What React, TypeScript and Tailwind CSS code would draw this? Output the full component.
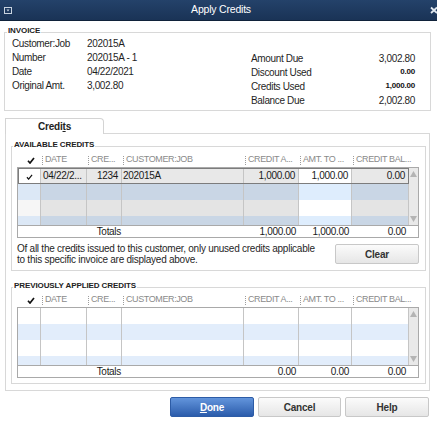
import React from "react";

type RowKind = "selected" | "blue" | "gray" | "white" | "pale";

const CELL_BG: Record<RowKind, string[]> = {
  selected: ["bg-white", "bg-[#e8e8e8]", "bg-[#e8e8e8]", "bg-[#e8e8e8]", "bg-[#e8e8e8]", "bg-white", "bg-[#e8e8e8]"],
  blue: ["bg-[#dce8f6]", "bg-[#c9d6e5]", "bg-[#c9d6e5]", "bg-[#c9d6e5]", "bg-[#c9d6e5]", "bg-[#deedfd]", "bg-[#c9d6e5]"],
  gray: ["bg-[#f6f6f6]", "bg-[#e4e4e4]", "bg-[#e4e4e4]", "bg-[#e4e4e4]", "bg-[#e4e4e4]", "bg-white", "bg-[#e4e4e4]"],
  white: ["bg-white", "bg-white", "bg-white", "bg-white", "bg-white", "bg-white", "bg-white"],
  pale: ["bg-[#e2edfb]", "bg-[#e2edfb]", "bg-[#e2edfb]", "bg-[#e2edfb]", "bg-[#e2edfb]", "bg-[#e2edfb]", "bg-[#e2edfb]"],
};

interface Row {
  kind: RowKind;
  cells?: string[];
}

function Check({ small }: { small?: boolean }) {
  return (
    <svg width={small ? 7 : 8} height={small ? 6 : 7} viewBox="0 0 8 7">
      <path d="M1 3.8 L3 6 L7 1" fill="none" stroke="#111" strokeWidth={small ? 1.4 : 1.7} />
    </svg>
  );
}

function GroupBox({
  label,
  className,
  labelClass,
  children,
}: {
  label: string;
  className: string;
  labelClass: string;
  children: React.ReactNode;
}) {
  return (
    <div className={`relative box-border border border-[#d8d8d8] bg-white ${className}`}>
      <span
        className={`absolute -top-[7px] bg-white px-[1px] text-[8px] font-bold leading-[9px] tracking-[-0.1px] text-[#222] ${labelClass}`}
      >
        {label}
      </span>
      {children}
    </div>
  );
}

function HeadCell({ text }: { text: string }) {
  return (
    <div className="flex min-w-0 items-center gap-[2px] whitespace-nowrap pl-[1px]">
      <span className="h-[9px] shrink-0 border-l border-dotted border-[#9c9c9c]" />
      <span>{text}</span>
    </div>
  );
}

function TableHeader() {
  return (
    <div className="grid h-[14px] grid-cols-[23px_46px_35px_122px_55px_53px_57px] items-center pl-[1px] text-[9px] tracking-[-0.4px] text-[#8a8a8a]">
      <div className="flex justify-center pl-[2px]">
        <Check />
      </div>
      <HeadCell text="DATE" />
      <HeadCell text="CRE..." />
      <HeadCell text="CUSTOMER:JOB" />
      <HeadCell text="CREDIT A..." />
      <HeadCell text="AMT. TO ..." />
      <HeadCell text="CREDIT BAL..." />
    </div>
  );
}

function ScrollBar() {
  return (
    <div className="flex w-[9px] flex-col items-center justify-between bg-[#e9e9e9] py-[3px]">
      <svg width="7" height="6" viewBox="0 0 7 6">
        <path d="M3.5 0 L7 6 L0 6 Z" fill="#b4b4b4" />
      </svg>
      <svg width="7" height="6" viewBox="0 0 7 6">
        <path d="M0 0 L7 0 L3.5 6 Z" fill="#b4b4b4" />
      </svg>
    </div>
  );
}

function CreditTable({ rows, totals }: { rows: Row[]; totals: string[] }) {
  const align = ["", "text-left pl-[2px]", "text-right pr-[3px]", "text-left pl-[1px]", "text-right pr-[3px]", "text-right pr-[3px]", "text-right pr-[3px]"];
  return (
    <div className="w-[402px] border border-[#a9a9a9] text-[10px] tracking-[-0.3px] text-[#1a1a1a]">
      <div className="flex h-[57px]">
        <div className="flex w-[391px] flex-col overflow-hidden">
          {rows.map((row, r) => (
            <div
              key={r}
              className={`grid h-[16px] shrink-0 grid-cols-[23px_46px_35px_122px_55px_53px_57px] ${
                row.kind === "selected" ? "outline outline-1 -outline-offset-1 outline-[#7c7c7c]" : ""
              }`}
            >
              {CELL_BG[row.kind].map((bg, c) => (
                <div
                  key={c}
                  className={`overflow-hidden whitespace-nowrap border-r border-[#c5c5c5] leading-[16px] ${bg} ${align[c]}`}
                >
                  {c === 0 && row.cells ? (
                    <div className="flex h-full items-center justify-center pl-[1px] pt-[2px]">
                      <Check small />
                    </div>
                  ) : (
                    row.cells?.[c] ?? ""
                  )}
                </div>
              ))}
            </div>
          ))}
        </div>
        <ScrollBar />
      </div>
      <div className="grid h-[12px] grid-cols-[104px_122px_55px_53px_57px_9px] items-center border-t border-[#a9a9a9] bg-white leading-[12px]">
        <div className="pr-[1px] text-right">Totals</div>
        <div />
        <div className="pr-[3px] text-right">{totals[0]}</div>
        <div className="pr-[3px] text-right">{totals[1]}</div>
        <div className="pr-[3px] text-right">{totals[2]}</div>
        <div />
      </div>
    </div>
  );
}

function Button({ children, primary, className = "" }: { children: React.ReactNode; primary?: boolean; className?: string }) {
  return (
    <button
      type="button"
      className={`box-border flex h-[20px] items-center justify-center rounded-[2px] border text-[10px] font-bold tracking-[-0.2px] ${
        primary
          ? "border-[#2d5ca6] bg-gradient-to-b from-[#6395dc] to-[#2b5cab] text-white"
          : "border-[#c8c8c8] bg-gradient-to-b from-[#fbfbfb] to-[#e6e6e6] text-[#333]"
      } ${className}`}
    >
      {children}
    </button>
  );
}

export default function App() {
  const invoiceLeft = [
    ["Customer:Job", "202015A"],
    ["Number", "202015A - 1"],
    ["Date", "04/22/2021"],
    ["Original Amt.", "3,002.80"],
  ];

  const availableRows: Row[] = [
    { kind: "selected", cells: ["✓", "04/22/2...", "1234", "202015A", "1,000.00", "1,000.00", "0.00"] },
    { kind: "blue" },
    { kind: "gray" },
    { kind: "blue" },
  ];

  const previousRows: Row[] = [{ kind: "white" }, { kind: "pale" }, { kind: "white" }, { kind: "pale" }];

  return (
    <div className="h-[424px] w-[437px] overflow-hidden bg-white font-['Liberation_Sans',Arial,sans-serif] text-[#1f1f1f]">
      {/* title bar */}
      <div className="flex h-[21px] items-center border-b border-[#10223a] bg-gradient-to-b from-[#24426a] to-[#1a3356] pl-[4px]">
        <svg width="8" height="7" viewBox="0 0 8 7">
          <rect x="0.5" y="0.5" width="7" height="6" fill="none" stroke="#c9d3df" />
          <path d="M2.5 2.5 L5.5 2.5 L4 4.5 Z" fill="#c9d3df" />
        </svg>
        <div className="flex-1 text-center text-[10.5px] tracking-[-0.2px] text-white">Apply Credits</div>
        <svg width="7" height="8" viewBox="0 0 7 8">
          <path d="M1 1.5 L7 7 M7 1.5 L1 7" stroke="#dfe6ee" strokeWidth="1.8" />
        </svg>
      </div>

      {/* invoice */}
      <GroupBox label="INVOICE" className="ml-[4px] mt-[11px] h-[79px] w-[427px]" labelClass="left-[2px]">
        <div className="flex pl-[7px] pr-[15px] pt-[3px] text-[10px] tracking-[-0.35px]">
          <div className="flex flex-col">
            {invoiceLeft.map(([label, value]) => (
              <div key={label} className="flex h-[14px] items-center">
                <span className="w-[75px]">{label}</span>
                <span>{value}</span>
              </div>
            ))}
          </div>
          <div className="ml-auto mt-[15px] flex w-[164px] flex-col">
            <div className="flex h-[14px] items-center justify-between">
              <span>Amount Due</span>
              <span>3,002.80</span>
            </div>
            <div className="flex h-[14px] items-center justify-between">
              <span>Discount Used</span>
              <span className="text-[8px] font-bold tracking-[-0.2px] text-[#111]">0.00</span>
            </div>
            <div className="flex h-[14px] items-center justify-between">
              <span>Credits Used</span>
              <span className="text-[8px] font-bold tracking-[-0.2px] text-[#111]">1,000.00</span>
            </div>
            <div className="flex h-[14px] items-center justify-between">
              <span>Balance Due</span>
              <span>2,002.80</span>
            </div>
          </div>
        </div>
      </GroupBox>

      {/* tab */}
      <div className="ml-[5px] mt-[7px]">
        <div className="relative z-10 -mb-px flex h-[16px] w-[99px] items-center justify-center rounded-tr-[4px] border border-b-0 border-[#d4d4d4] bg-white text-[10px] font-bold tracking-[-0.2px] text-[#222]">
          <span>
            Credi<span className="underline">t</span>s
          </span>
        </div>
        <div className="box-border h-[258px] w-[425px] border border-[#d8d8d8] bg-white pl-[5px]">
          {/* available */}
          <GroupBox label="AVAILABLE CREDITS" className="mt-[12px] h-[125px] w-[415px]" labelClass="left-[1px]">
            <div className="pl-[5px] pt-[6px]">
              <TableHeader />
              <CreditTable rows={availableRows} totals={["1,000.00", "1,000.00", "0.00"]} />
              <div className="mt-[5px] flex w-[402px] items-start">
                <p className="w-[300px] text-[10px] leading-[11px] tracking-[-0.25px] text-[#1f1f1f]">
                  Of all the credits issued to this customer, only unused credits applicable to this specific invoice are displayed above.
                </p>
                <Button className="ml-auto mt-[1px] w-[84px]">Clear</Button>
              </div>
            </div>
          </GroupBox>

          {/* previously applied */}
          <GroupBox label="PREVIOUSLY APPLIED CREDITS" className="mt-[16px] h-[97px] w-[415px]" labelClass="left-[1px]">
            <div className="pl-[5px] pt-[5px]">
              <TableHeader />
              <CreditTable rows={previousRows} totals={["0.00", "0.00", "0.00"]} />
            </div>
          </GroupBox>
        </div>
      </div>

      {/* buttons */}
      <div className="mt-[6px] flex justify-end gap-[4px] pr-[8px]">
        <Button primary className="w-[84px]">
          <span>
            <span className="underline">D</span>one
          </span>
        </Button>
        <Button className="w-[83px]">Cancel</Button>
        <Button className="w-[84px]">Help</Button>
      </div>
    </div>
  );
}
